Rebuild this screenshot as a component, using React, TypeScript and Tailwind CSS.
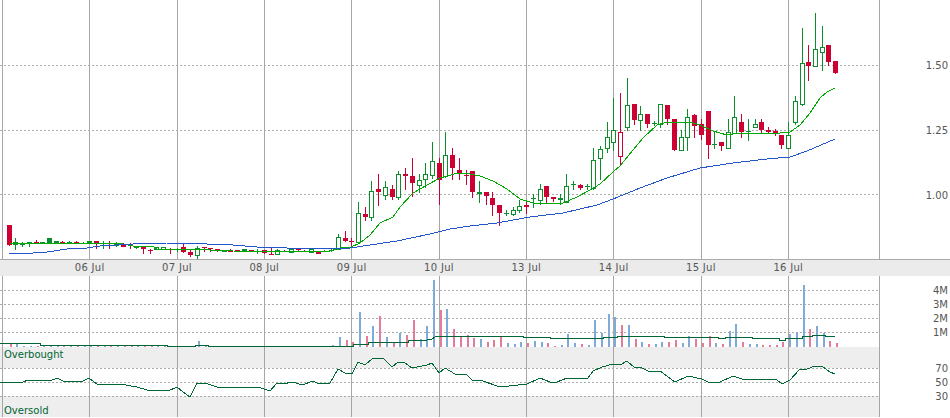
const CANDLES: [string, number, number, number, number][] = [
["r",225,225,245,246],["f",238,242,245,250],["f",242,244,244,247],["f",242,242,243,247],["r",240,242,243,243],["f",242,242,243,243],["f",238,238,243,243],["f",241,241,243,243],["r",241,242,243,243],["f",241,242,243,243],
["r",241,242,243,243],["f",242,243,243,243],["f",241,241,244,244],["r",241,241,244,249],["f",241,245,245,249],["r",241,245,245,249],["f",242,243,246,247],["r",243,245,247,247],["r",243,245,245,249],["f",246,247,247,249],
["r",247,247,249,254],["r",249,250,250,254],["g",247,247,249,249],["g",247,247,249,249],["r",248,249,249,254],["f",248,249,250,252],["r",243,247,252,253],["r",249,252,255,257],["g",246,248,255,259],["r",247,247,248,252],
["r",248,248,249,252],["r",249,249,250,252],["f",250,250,252,252],["r",249,250,252,252],["r",250,250,252,252],["f",249,249,252,252],["r",250,250,252,252],["f",249,251,251,254],["r",250,250,253,254],["r",247,254,255,255],
["g",249,250,254,254],["r",250,251,252,252],["g",249,249,252,252],["r",249,249,250,252],["r",250,251,252,252],["g",248,249,252,253],["r",252,252,254,254],["f",250,251,252,252],["f",248,250,251,252],
["g",234,237,249,250],["r",231,238,241,242],["r",238,241,242,247],["g",202,213,242,243],["r",207,214,217,221],["g",181,191,217,221],["r",174,189,192,206],["g",181,187,195,200],["r",185,189,197,200],["g",171,174,197,200],["r",168,174,176,190],
["r",158,176,183,197],["g",174,180,185,193],["g",163,174,179,188],["g",142,161,175,179],["r",158,163,180,205],["g",132,155,176,178],["r",148,155,168,180],["r",158,170,174,180],["r",170,175,175,185],["r",171,171,192,198],
["f",181,192,194,203],["r",192,192,196,205],["r",192,198,205,216],["r",205,205,213,226],["f",210,213,213,216],["g",207,210,214,216],["g",200,206,210,213],["r",200,205,207,214],["f",194,198,199,208],["g",184,189,200,205],
["r",186,186,197,203],["r",197,197,199,202],["f",194,198,200,205],["g",174,186,202,203],["f",181,184,184,190],["r",184,185,188,190],["f",184,186,186,190],["g",148,160,188,190],["g",146,149,158,180],["g",122,137,148,153],
["g",98,130,142,151],["R",93,132,156,166],["g",78,105,127,131],["r",104,104,120,125],["g",106,114,120,131],["r",114,114,124,128],["f",121,123,124,126],["g",104,104,124,128],["r",105,105,119,125],["r",119,119,150,151],
["g",130,137,150,150],["g",109,117,137,151],["r",114,115,126,138],["r",119,124,135,140],["r",111,111,145,159],["f",132,144,144,149],["r",142,142,146,151],["g",119,132,148,148],["g",96,117,133,134],["r",114,122,132,138],
["f",119,131,131,141],["g",119,124,127,128],["r",119,122,130,133],["r",127,130,132,133],["r",129,131,133,136],["r",135,135,145,149],["g",122,135,148,148],["g",96,101,122,125],["g",28,63,104,106],["r",45,62,66,81],
["g",13,49,66,67],["g",26,47,52,71],["r",45,45,62,66],["r",61,61,73,74],
];

const VOL = [
-3,3,1,1,-1,1,2,1,-2,1,-1,1,2,-2,2,-1,1,-1,-2,1,-2,-2,1,1,-1,1,-1,-1,6,1,-1,1,-1,1,-1,1,-1,1,-1,1,-1,1,-1,1,-1,1,-1,1,
2,10,-7,-5,35,-11,21,-31,10,-5,14,-12,-27,8,21,67,-37,38,-18,-10,-12,-9,8,-5,-7,-10,4,3,5,-4,6,5,-4,-1,2,13,4,-3,2,27,14,33,30,-22,22,-8,5,-3,3,
5,-5,-7,4,11,-8,-4,-11,4,-3,16,23,-5,3,3,-2,-2,-2,-5,13,15,62,-18,21,14,-6,-4,
];

const MA_GREEN = "10,243 90,243 123,244 133,246 153,246 157,249 187,249 233,251 320,252 330,251 340,248 351,247 360,243 370,235 380,223 393,217 400,207 413,193 427,185 440,178 447,176 458,173 470,174 480,176 493,181 507,189 520,199 533,203 550,204 563,203 577,197 590,190 600,184 613,172 620,166 633,150 643,138 657,125 667,122 680,123 690,122 700,125 713,131 727,135 740,133 753,133 780,133 790,132 800,125 810,113 820,98 827,92 835,88";
const MA_BLUE = "9,254 33,253 47,252 67,249 87,248 100,246 133,244 167,243 180,243 207,244 233,245 257,247 287,248 320,248 330,248 350,248 370,245 397,241 430,234 450,229 470,226 497,223 530,217 563,213 597,205 613,199 640,188 667,178 700,168 733,163 767,159 790,157 807,151 835,139";
const VOL_MA = "0,343 40,343 40,345 167,345 167,346 195,346 195,345 208,345 208,346 330,346 353,346 353,344 368,344 368,342 408,342 408,340 427,340 432,339 435,337 442,336 503,336 503,336 523,336 523,337 550,337 550,338 603,338 603,337 617,337 617,336 643,336 650,336 664,336 664,337 718,337 718,338 725,338 725,337 752,337 752,338 779,338 779,340 785,340 785,338 802,338 802,336 812,336 812,335 825,335 825,336 835,336";
const RSI = "0,382 3,382 10,383 23,382 28,380 50,381 57,378 63,381 83,381 89,378 97,384 107,385 120,384 137,387 147,390 160,390 168,391 177,387 183,392 190,397 197,383 205,383 217,387 258,387 270,391 277,383 283,384 292,382 303,385 312,381 320,384 330,383 338,369 345,373 352,374 358,362 365,365 372,359 383,358 392,367 398,362 405,363 412,368 427,365 432,363 439,373 445,368 455,374 467,375 472,380 480,380 500,387 527,384 540,378 550,382 557,382 567,378 578,378 588,378 593,371 602,367 613,364 620,365 627,361 635,368 640,367 648,371 655,371 660,371 675,382 688,376 702,379 708,382 720,382 733,376 742,379 753,379 777,380 782,384 790,380 800,369 807,369 815,366 822,366 830,372 835,374";

const GRID_X = [2, 89, 177, 264, 351, 439, 526, 613, 701, 788, 879];
const RED = "#cc0033";
const GREEN = "#0a8f2a";

const barX = (i: number) => Math.round(1.9 + 6.72 * (i + 1));

function VLines({ y1, y2 }: { y1: number; y2: number }) {
  return (
    <>
      {GRID_X.map((x) => (
        <rect key={x} x={x} y={y1} width={1} height={y2 - y1} fill="#a6a6a6" />
      ))}
    </>
  );
}

function HDots({ ys }: { ys: number[] }) {
  return (
    <>
      {ys.map((y) => (
        <line key={y} x1={0} x2={879} y1={y + 0.5} y2={y + 0.5} stroke="#aaaaaa" strokeWidth={1} strokeDasharray="2 2" />
      ))}
    </>
  );
}

function Candle({ i, d }: { i: number; d: [string, number, number, number, number] }) {
  const [t, wt, bt, bb, wb] = d;
  const x = barX(i);
  const color = t === "r" || t === "R" ? RED : GREEN;
  const hollow = t === "g" || t === "R";
  return (
    <g>
      <rect x={x} y={wt} width={1} height={Math.max(wb - wt, 1)} fill={color} />
      {hollow ? (
        <rect x={x - 1.5} y={bt + 0.5} width={4} height={Math.max(bb - bt, 1)} fill="#ffffff" stroke={color} strokeWidth={1} />
      ) : (
        <rect x={x - 2} y={bt} width={5} height={Math.max(bb - bt, 1)} fill={color} />
      )}
    </g>
  );
}

export default function App() {
  return (
    <div className="flex h-[418px] w-[950px] flex-col bg-white font-['DejaVu_Sans',sans-serif] text-[10px] text-[#555555]">
      <div className="flex h-[259px]">
        <svg width={880} height={259} viewBox="0 0 880 259" shapeRendering="crispEdges" className="block shrink-0">
          <VLines y1={0} y2={259} />
          <HDots ys={[65, 130, 194]} />
          {CANDLES.map((d, i) => (
            <Candle key={i} i={i} d={d} />
          ))}
          <polyline points={MA_GREEN} fill="none" stroke="#00aa00" strokeWidth={1} />
          <polyline points={MA_BLUE} fill="none" stroke="#2255cc" strokeWidth={1} />
        </svg>
        <div className="flex flex-1 flex-col items-end gap-[51px] pr-[2px] pt-[59px] leading-[14px]">
          <div>1.50</div>
          <div>1.25</div>
          <div>1.00</div>
        </div>
      </div>

      <div className="flex h-[17px] items-center border-t border-[#aaaaaa] bg-[#ebebeb] pb-[1px] pl-[46px] tracking-[0.3px]">
        {["06 Jul", "07 Jul", "08 Jul", "09 Jul", "10 Jul", "13 Jul", "14 Jul", "15 Jul", "16 Jul"].map((d) => (
          <div key={d} className="w-[87.33px] text-center">
            {d}
          </div>
        ))}
      </div>

      <div className="flex h-[71px]">
        <svg width={880} height={71} viewBox="0 276 880 71" shapeRendering="crispEdges" className="block shrink-0">
          <VLines y1={276} y2={347} />
          <HDots ys={[290, 304, 318, 332]} />
          {VOL.map((v, i) => (
            <rect
              key={i}
              x={barX(i) + 1}
              y={347 - Math.abs(v)}
              width={2}
              height={Math.abs(v)}
              fill={v > 0 ? "#7fabd8" : "#e67c9c"}
            />
          ))}
          <polyline points={VOL_MA} fill="none" stroke="#006633" strokeWidth={1} />
        </svg>
        <div className="flex flex-1 flex-col items-end pr-[2px] pt-[8px] leading-[14px]">
          <div>4M</div>
          <div>3M</div>
          <div>2M</div>
          <div>1M</div>
        </div>
      </div>

      <div className="flex h-[70px]">
        <div className="relative h-[70px] w-[880px] shrink-0 text-[#006633]">
          <div className="h-[21px] bg-[#eeeeee] pl-[4px] pt-[1px] leading-[14px]">Overbought</div>
          <div className="h-[28px]" />
          <div className="h-[21px] bg-[#eeeeee] pl-[4px] pt-[8px] leading-[14px]">Oversold</div>
          <svg width={880} height={70} viewBox="0 347 880 70" shapeRendering="crispEdges" className="absolute left-0 top-0 block">
            <VLines y1={347} y2={417} />
            <HDots ys={[368, 382, 396]} />
            <polyline points={RSI} fill="none" stroke="#006633" strokeWidth={1} />
          </svg>
        </div>
        <div className="flex flex-1 flex-col items-end pr-[2px] pt-[15px] leading-[14px]">
          <div>70</div>
          <div>50</div>
          <div>30</div>
        </div>
      </div>
    </div>
  );
}
